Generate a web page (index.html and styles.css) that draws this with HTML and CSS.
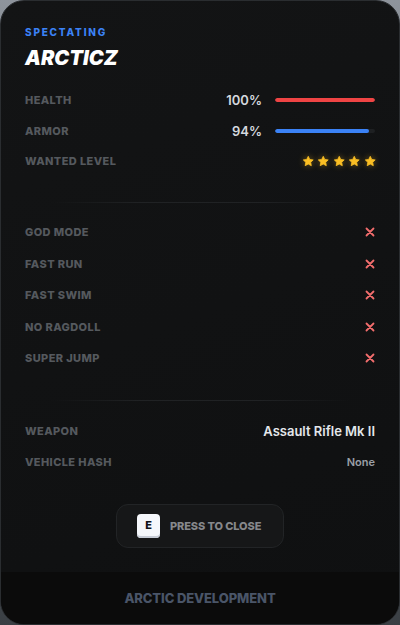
FILE: index.html
```html
<!DOCTYPE html>
<html>
<head>
<meta charset="utf-8">
<link rel="stylesheet" href="styles.css">
</head>
<body>
<div class="card">
  <div class="content">
    <div class="eyebrow">SPECTATING</div>
    <div class="name">ARCTICZ</div>

    <div class="stats">
      <div class="row">
        <span class="label">HEALTH</span>
        <div class="meter">
          <span class="pct">100%</span>
          <div class="track"><div class="fill red" style="width:100%"></div></div>
        </div>
      </div>
      <div class="row">
        <span class="label">ARMOR</span>
        <div class="meter">
          <span class="pct">94%</span>
          <div class="track"><div class="fill blue" style="width:94%"></div></div>
        </div>
      </div>
      <div class="row">
        <span class="label">WANTED LEVEL</span>
        <div class="stars">
          <svg viewBox="0 0 24 24"><path d="M12 2.5l2.9 6 6.6.9-4.8 4.6 1.2 6.5L12 17.4l-5.9 3.1 1.2-6.5-4.8-4.6 6.6-.9z"/></svg>
          <svg viewBox="0 0 24 24"><path d="M12 2.5l2.9 6 6.6.9-4.8 4.6 1.2 6.5L12 17.4l-5.9 3.1 1.2-6.5-4.8-4.6 6.6-.9z"/></svg>
          <svg viewBox="0 0 24 24"><path d="M12 2.5l2.9 6 6.6.9-4.8 4.6 1.2 6.5L12 17.4l-5.9 3.1 1.2-6.5-4.8-4.6 6.6-.9z"/></svg>
          <svg viewBox="0 0 24 24"><path d="M12 2.5l2.9 6 6.6.9-4.8 4.6 1.2 6.5L12 17.4l-5.9 3.1 1.2-6.5-4.8-4.6 6.6-.9z"/></svg>
          <svg viewBox="0 0 24 24"><path d="M12 2.5l2.9 6 6.6.9-4.8 4.6 1.2 6.5L12 17.4l-5.9 3.1 1.2-6.5-4.8-4.6 6.6-.9z"/></svg>
        </div>
      </div>
    </div>

    <div class="divider"></div>

    <div class="toggles">
      <div class="row"><span class="label">GOD MODE</span><svg class="x" viewBox="0 0 10 10"><path d="M1.5 1.5l7 7M8.5 1.5l-7 7"/></svg></div>
      <div class="row"><span class="label">FAST RUN</span><svg class="x" viewBox="0 0 10 10"><path d="M1.5 1.5l7 7M8.5 1.5l-7 7"/></svg></div>
      <div class="row"><span class="label">FAST SWIM</span><svg class="x" viewBox="0 0 10 10"><path d="M1.5 1.5l7 7M8.5 1.5l-7 7"/></svg></div>
      <div class="row"><span class="label">NO RAGDOLL</span><svg class="x" viewBox="0 0 10 10"><path d="M1.5 1.5l7 7M8.5 1.5l-7 7"/></svg></div>
      <div class="row"><span class="label">SUPER JUMP</span><svg class="x" viewBox="0 0 10 10"><path d="M1.5 1.5l7 7M8.5 1.5l-7 7"/></svg></div>
    </div>

    <div class="divider"></div>

    <div class="info">
      <div class="row"><span class="label">WEAPON</span><span class="weapon">Assault Rifle Mk II</span></div>
      <div class="row"><span class="label">VEHICLE HASH</span><span class="hash">None</span></div>
    </div>

    <div class="actions">
      <button class="close-btn"><span class="key">E</span><span class="btn-text">PRESS TO CLOSE</span></button>
    </div>
  </div>
  <div class="footer">ARCTIC DEVELOPMENT</div>
</div>
</body>
</html>
```

FILE: styles.css
```css
* { box-sizing: border-box; }
html, body { margin: 0; padding: 0; }
body {
  width: 400px;
  height: 625px;
  background: linear-gradient(180deg, #8e949c 0%, #5d636a 60%, #3a3f44 100%);
  font-family: Inter, "Noto Sans", "Liberation Sans", sans-serif;
  overflow: hidden;
}
.card {
  width: 400px;
  height: 625px;
  border-radius: 24px;
  border: 1px solid #2a2d30;
  background: linear-gradient(160deg, #131415 0%, #111213 50%, #0f1011 100%);
  display: flex;
  flex-direction: column;
  overflow: hidden;
}
.content {
  padding: 25px 24px 0 24px;
  display: flex;
  flex-direction: column;
}
.eyebrow {
  font-size: 10px;
  line-height: 12px;
  font-weight: 800;
  letter-spacing: 1.8px;
  color: #3b82f6;
}
.name {
  margin-top: 8px;
  font-size: 20px;
  line-height: 24px;
  font-weight: 900;
  font-style: italic;
  color: #ffffff;
  letter-spacing: 0;
}
.row {
  display: flex;
  align-items: center;
  justify-content: space-between;
  height: 20px;
}
.label {
  font-size: 11px;
  font-weight: 800;
  color: #55595e;
  letter-spacing: 0.4px;
}
.stats {
  margin-top: 20px;
  display: flex;
  flex-direction: column;
  gap: 10.5px;
}
.meter {
  display: flex;
  align-items: center;
  gap: 13px;
}
.pct {
  font-size: 13px;
  font-weight: 600;
  color: #d4d8de;
}
.track {
  width: 100px;
  height: 4px;
  border-radius: 2px;
  background: #1e2022;
  overflow: hidden;
}
.fill { height: 100%; border-radius: 2px; }
.fill.red { background: #ef4444; }
.fill.blue { background: #3b82f6; }
.stars {
  display: flex;
  gap: 3px;
  margin-right: -1px;
}
.stars svg {
  width: 12.5px;
  height: 12.5px;
  fill: #fbbf24;
  stroke: #fbbf24;
  stroke-width: 1.5;
  stroke-linejoin: round;
  filter: drop-shadow(0 0 3px rgba(251, 191, 36, 0.45));
}
.divider {
  margin: 31px 25px 0;
  height: 1px;
  background: linear-gradient(90deg, rgba(40,42,45,0) 0%, #202224 30%, #202224 70%, rgba(40,42,45,0) 100%);
}
.toggles {
  margin-top: 19px;
  display: flex;
  flex-direction: column;
  gap: 11.5px;
}
.x {
  width: 10px;
  height: 10px;
  stroke: #f26d6d;
  stroke-width: 1.8;
  fill: none;
  stroke-linecap: round;
}
.toggles + .divider { margin-top: 32px; }
.info {
  margin-top: 19.5px;
  display: flex;
  flex-direction: column;
  gap: 11px;
}
.weapon {
  font-size: 13px;
  font-weight: 600;
  color: #e4e7eb;
}
.hash {
  font-size: 11px;
  font-weight: 600;
  color: #9a9fa6;
}
.actions {
  margin-top: 32px;
  display: flex;
  justify-content: center;
}
.close-btn {
  width: 168px;
  height: 44px;
  border-radius: 12px;
  border: 1px solid #222426;
  background: #161718;
  display: flex;
  align-items: center;
  padding: 0 0 0 20px;
  gap: 10px;
  font-family: inherit;
  cursor: pointer;
}
.key {
  width: 23px;
  height: 24px;
  border-radius: 4px;
  background: #f5f7fb;
  box-shadow: inset 0 -2px 0 #c7ccd6;
  color: #111318;
  font-size: 11px;
  font-weight: 800;
  display: flex;
  align-items: center;
  justify-content: center;
  padding-bottom: 2px;
}
.btn-text {
  font-size: 11px;
  font-weight: 800;
  color: #86888b;
  letter-spacing: -0.1px;
}
.footer {
  margin-top: auto;
  height: 52px;
  background: #0b0b0b;
  display: flex;
  align-items: center;
  justify-content: center;
  font-size: 13px;
  font-weight: 800;
  color: #4a5568;
  letter-spacing: -0.1px;
}
```
